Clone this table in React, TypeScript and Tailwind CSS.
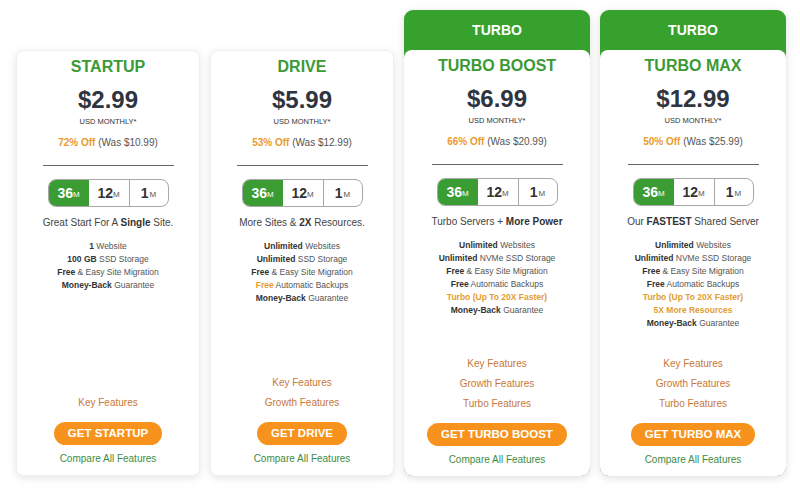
import React from "react";

type Feat = { b?: string; r?: string; tone?: "normal" | "orange" | "freeOrange" };

type Plan = {
  name: string;
  price: string;
  off: string;
  was: string;
  desc: React.ReactNode;
  features: Feat[];
  links: string[];
  button: string;
  turbo?: boolean;
};

const plans: Plan[] = [
  {
    name: "STARTUP",
    price: "$2.99",
    off: "72% Off",
    was: "(Was $10.99)",
    desc: (
      <>
        Great Start For A <b className="font-bold text-[#333]">Single</b> Site.
      </>
    ),
    features: [
      { b: "1", r: " Website" },
      { b: "100 GB", r: " SSD Storage" },
      { b: "Free", r: " & Easy Site Migration" },
      { b: "Money-Back", r: " Guarantee" },
    ],
    links: ["Key Features"],
    button: "GET STARTUP",
  },
  {
    name: "DRIVE",
    price: "$5.99",
    off: "53% Off",
    was: "(Was $12.99)",
    desc: (
      <>
        More Sites &amp; <b className="font-bold text-[#333]">2X</b> Resources.
      </>
    ),
    features: [
      { b: "Unlimited", r: " Websites" },
      { b: "Unlimited", r: " SSD Storage" },
      { b: "Free", r: " & Easy Site Migration" },
      { b: "Free", r: " Automatic Backups", tone: "freeOrange" },
      { b: "Money-Back", r: " Guarantee" },
    ],
    links: ["Key Features", "Growth Features"],
    button: "GET DRIVE",
  },
  {
    name: "TURBO BOOST",
    price: "$6.99",
    off: "66% Off",
    was: "(Was $20.99)",
    desc: (
      <>
        Turbo Servers + <b className="font-bold text-[#333]">More Power</b>
      </>
    ),
    features: [
      { b: "Unlimited", r: " Websites" },
      { b: "Unlimited", r: " NVMe SSD Storage" },
      { b: "Free", r: " & Easy Site Migration" },
      { b: "Free", r: " Automatic Backups" },
      { b: "Turbo (Up To 20X Faster)", tone: "orange" },
      { b: "Money-Back", r: " Guarantee" },
    ],
    links: ["Key Features", "Growth Features", "Turbo Features"],
    button: "GET TURBO BOOST",
    turbo: true,
  },
  {
    name: "TURBO MAX",
    price: "$12.99",
    off: "50% Off",
    was: "(Was $25.99)",
    desc: (
      <>
        Our <b className="font-bold text-[#333]">FASTEST</b> Shared Server
      </>
    ),
    features: [
      { b: "Unlimited", r: " Websites" },
      { b: "Unlimited", r: " NVMe SSD Storage" },
      { b: "Free", r: " & Easy Site Migration" },
      { b: "Free", r: " Automatic Backups" },
      { b: "Turbo (Up To 20X Faster)", tone: "orange" },
      { b: "5X More Resources", tone: "orange" },
      { b: "Money-Back", r: " Guarantee" },
    ],
    links: ["Key Features", "Growth Features", "Turbo Features"],
    button: "GET TURBO MAX",
    turbo: true,
  },
];

function Toggle() {
  return (
    <div className="mt-[13px] mx-auto flex h-[28px] w-[121px] overflow-hidden rounded-[8px] border border-[#a8a8a8]">
      <div className="flex w-[40px] items-center justify-center bg-[#3a9c33] text-white">
        <span className="text-[14px] font-bold leading-none">36</span>
        <span className="mt-[3px] text-[8px] leading-none">M</span>
      </div>
      <div className="flex w-[40px] items-center justify-center text-[#333]">
        <span className="text-[14px] font-bold leading-none">12</span>
        <span className="mt-[3px] text-[8px] leading-none text-[#555]">M</span>
      </div>
      <div className="flex flex-1 items-center justify-center border-l border-[#a8a8a8] text-[#333]">
        <span className="text-[14px] font-bold leading-none">1</span>
        <span className="ml-[1px] mt-[3px] text-[8px] leading-none text-[#555]">M</span>
      </div>
    </div>
  );
}

function Feature({ f }: { f: Feat }) {
  if (f.tone === "orange") {
    return <div className="h-[13px] leading-[13px] font-bold text-[#e49c2f]">{f.b}</div>;
  }
  return (
    <div className="h-[13px] leading-[13px]">
      <span className={f.tone === "freeOrange" ? "font-bold text-[#ee9a2a]" : "font-bold text-[#333]"}>
        {f.b}
      </span>
      <span className="text-[#555]">{f.r}</span>
    </div>
  );
}

function CardBody({ p }: { p: Plan }) {
  return (
    <div className="flex flex-1 flex-col items-center bg-white px-[10px] text-center">
      <div className="mt-[6px] h-[20px] text-[16px] font-bold leading-[20px] text-[#3b9a35]">{p.name}</div>
      <div className="mt-[9px] h-[28px] text-[24px] font-bold leading-[28px] text-[#2e3440]">{p.price}</div>
      <div className="mt-[3px] h-[10px] text-[7.5px] leading-[10px] text-[#333]">USD MONTHLY*</div>
      <div className="mt-[9px] h-[14px] text-[10px] leading-[14px] text-[#555]">
        <span className="font-bold text-[#eb9a2c]">{p.off}</span> {p.was}
      </div>
      <div className="mt-[15px] h-px w-[131px] bg-[#666]" />
      <Toggle />
      <div className="mt-[9px] h-[14px] whitespace-nowrap text-[10px] leading-[14px] text-[#444]">{p.desc}</div>
      <div className="mt-[10px] flex flex-col items-center whitespace-nowrap text-[8.5px]">
        {p.features.map((f, i) => (
          <Feature key={i} f={f} />
        ))}
      </div>
      <div className="flex-1" />
      <div className="flex flex-col items-center">
        {p.links.map((l) => (
          <div key={l} className="h-[20px] text-[10px] leading-[20px] text-[#c8773a]">
            {l}
          </div>
        ))}
      </div>
      <div className="mt-[9px] flex h-[23px] items-center justify-center rounded-full bg-[#f7931d] px-[14px] text-[11.5px] font-bold leading-none text-white">
        {p.button}
      </div>
      <div className="mt-[7px] mb-[9px] h-[14px] text-[10px] leading-[14px] text-[#3d8c42]">Compare All Features</div>
    </div>
  );
}

export default function App() {
  return (
    <div
      className="h-[491px] w-[800px] bg-white"
      style={{ fontFamily: '"Liberation Sans", Arial, sans-serif' }}
    >
      <div className="flex h-[476px] gap-[10px] pl-[16px] pt-[10px]">
        {plans.map((p) =>
          p.turbo ? (
            <div
              key={p.name}
              className="flex w-[186px] flex-col overflow-hidden rounded-[9px] bg-[#36a12d] shadow-[0_2px_8px_rgba(0,0,0,0.13)]"
            >
              <div className="flex h-[40px] items-center justify-center text-[14px] font-bold text-white">TURBO</div>
              <div className="flex flex-1 flex-col overflow-hidden rounded-t-[8px] bg-white">
                <CardBody p={p} />
              </div>
            </div>
          ) : (
            <div
              key={p.name}
              className="mt-[40px] flex w-[184px] flex-col overflow-hidden rounded-[8px] border border-[#efefef] bg-white shadow-[0_2px_8px_rgba(0,0,0,0.11)]"
            >
              <CardBody p={p} />
            </div>
          )
        )}
      </div>
    </div>
  );
}
